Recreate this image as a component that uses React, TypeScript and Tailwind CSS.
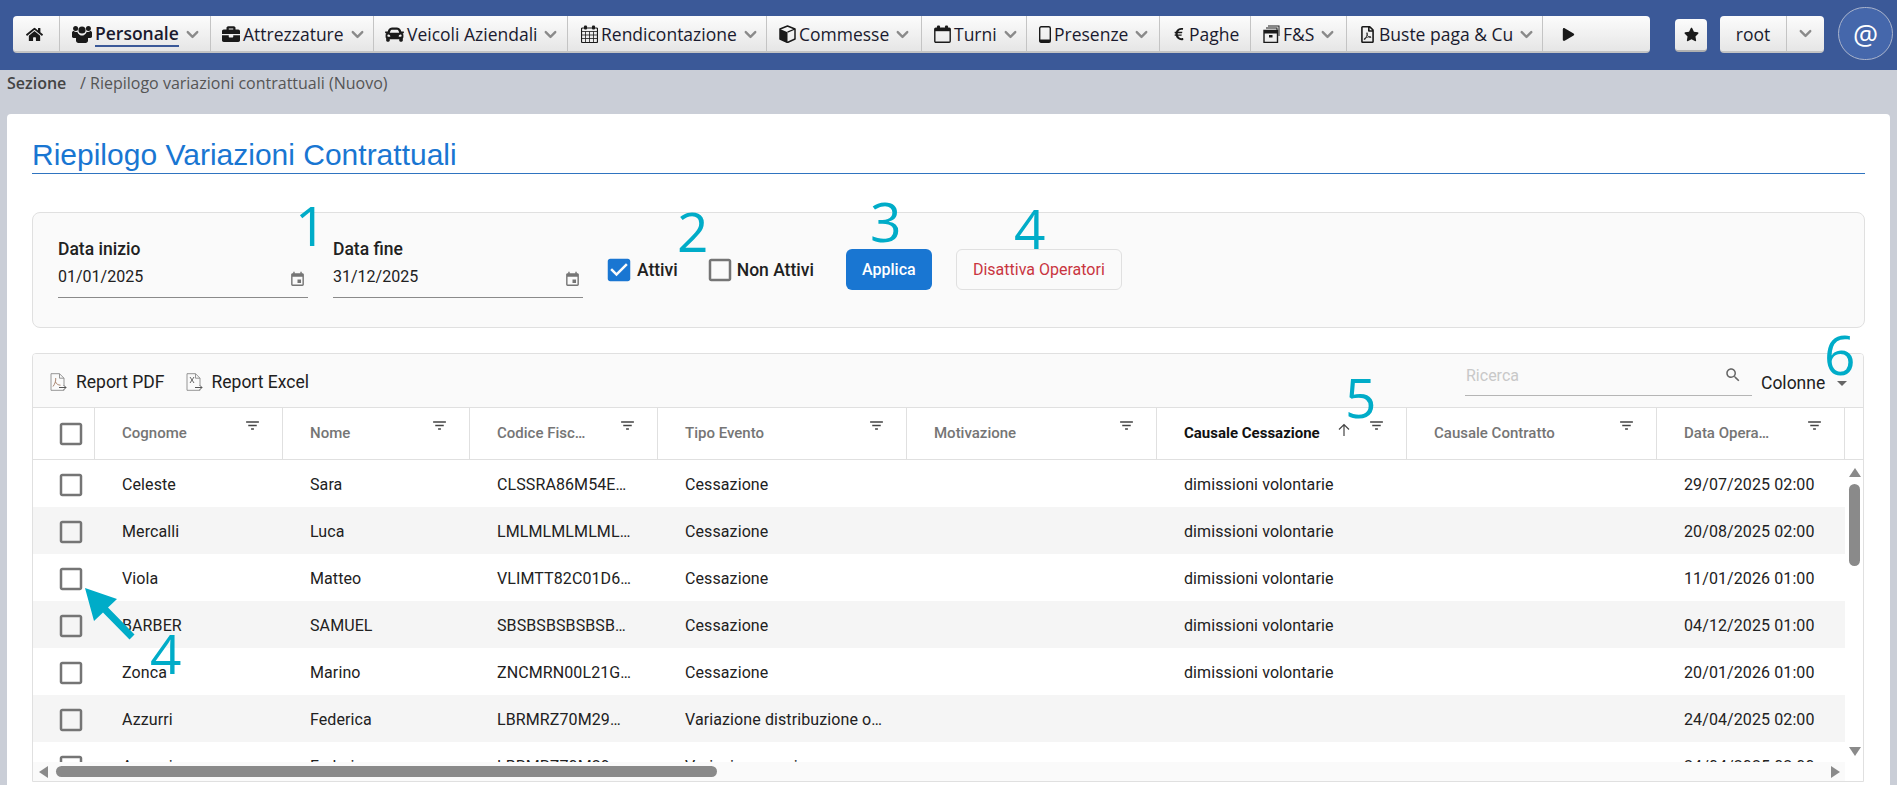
import React from 'react';
import {
  FaHome,
  FaBriefcase,
  FaCar,
  FaEuroSign,
  FaRegFilePdf,
  FaPlay,
  FaStar,
} from 'react-icons/fa';
import { ChevronDown } from 'lucide-react';

const UsersIcon = () => (
  <svg width="20" height="18" viewBox="0 0 20 18" fill="#1a1a1a">
    <circle cx="10" cy="5" r="3.6" />
    <circle cx="3.6" cy="3.4" r="2.5" />
    <circle cx="16.4" cy="3.4" r="2.5" />
    <path d="M0 7.5c0-1 .8-1.6 1.8-1.6.6.7 1.4 1.1 2.3 1.1.5 0 1-.1 1.3-.3.3 1.300 1.100 2.400 2.200 3.100C5.800 10.400 4.700 11.600 4.300 13H1.500C.6 13 0 12.400 0 11.600z" />
    <path d="M20 7.500c0-1-.8-1.600-1.800-1.600-.6.7-1.400 1.100-2.300 1.100-.5 0-1-.1-1.300-.3-.3 1.300-1.100 2.400-2.200 3.100 1.800.6 2.900 1.800 3.300 3.200h2.800c.9 0 1.500-.6 1.500-1.400z" />
    <path d="M6.600 9.200c.9.800 2.100 1.300 3.400 1.300s2.500-.5 3.400-1.300c1.500.2 2.600 1.400 2.600 3v3.300c0 1.400-1 2.500-2.500 2.500h-7C5 18 4 16.900 4 15.500v-3.300c0-1.600 1.100-2.800 2.600-3z" />
  </svg>
);

const CalendarGridIcon = () => (
  <svg width="17" height="18" viewBox="0 0 17 18" fill="none" stroke="#1a1a1a">
    <rect x="0.5" y="3" width="16" height="14.5" rx="1" strokeWidth="1.2" />
    <path d="M0.5 6.5h16M0.5 10h16M0.5 13.5h16M4.5 6.5v11M8.5 6.5v11M12.5 6.5v11" strokeWidth="0.8" />
    <rect x="3" y="0.5" width="3" height="4" rx="1" fill="#1a1a1a" stroke="none" />
    <rect x="11" y="0.5" width="3" height="4" rx="1" fill="#1a1a1a" stroke="none" />
  </svg>
);

const CubeIcon = () => (
  <svg width="17" height="18" viewBox="0 0 17 18">
    <path d="M8.5 1 16 4v10l-7.5 3.5L1 14V4z" fill="none" stroke="#1a1a1a" strokeWidth="1.5" strokeLinejoin="round" />
    <path d="M1 4l7.5 3.2v10.3L1 14z" fill="#1a1a1a" />
    <path d="M8.5 7.2 16 4" stroke="#1a1a1a" strokeWidth="1.3" />
  </svg>
);

const ShiftIcon = () => (
  <svg width="17" height="18" viewBox="0 0 17 18" fill="none">
    <rect x="0.8" y="3.2" width="15.4" height="14" rx="1" stroke="#1a1a1a" strokeWidth="1.4" />
    <rect x="0.8" y="3.2" width="15.4" height="3" fill="#1a1a1a" />
    <rect x="3" y="0.5" width="3" height="4.5" rx="1" fill="#1a1a1a" />
    <rect x="11" y="0.5" width="3" height="4.5" rx="1" fill="#1a1a1a" />
  </svg>
);

const TabletIcon = () => (
  <svg width="12" height="17" viewBox="0 0 12 17" fill="none">
    <rect x="0.7" y="0.7" width="10.6" height="15.6" rx="1.5" stroke="#1a1a1a" strokeWidth="1.4" />
    <rect x="0.7" y="13.5" width="10.6" height="2.8" fill="#1a1a1a" />
  </svg>
);

const ArchiveIcon = () => (
  <svg width="17" height="18" viewBox="0 0 17 18" fill="#1a1a1a">
    <path d="M5 .5h11.5V11h-1V1.5H5z" />
    <path d="M3 2.5h11.5V5h-1V3.5H3z" />
    <path d="M1 5.5h13.5v12H1z" fill="none" stroke="#1a1a1a" strokeWidth="1.4" />
    <rect x="1" y="5.5" width="13.5" height="3" />
    <rect x="6" y="10" width="3.5" height="2.5" />
  </svg>
);

const ReportIcon = ({ mark }: { mark: 'pdf' | 'xls' }) => (
  <svg width="17" height="18" viewBox="0 0 17 18" fill="none">
    <path d="M1 .7h8.5L14 5.2V13M14 16v1.3H1V.7" stroke="#8a8a8a" strokeWidth="0.9" />
    <path d="M9.5.7v4.5H14" stroke="#8a8a8a" strokeWidth="0.9" />
    {mark === 'pdf' ? (
      <path d="M3 13.5c2-2.5 3-6 2.7-8.5M5.5 9c1 2 2.5 3 5 3.2" stroke="#a07860" strokeWidth="0.9" />
    ) : (
      <path d="M4 4l4 6M8 4l-4 6" stroke="#666" strokeWidth="1" />
    )}
    <path d="M9 14.5h7M14 12.5l2 2-2 2" stroke="#555" strokeWidth="1" />
  </svg>
);

const EventIcon = () => (
  <svg width="17" height="17" viewBox="0 0 24 24" fill="#757575">
    <path d="M17 12h-5v5h5v-5zM16 1v2H8V1H6v2H5c-1.11 0-1.99.9-1.99 2L3 19c0 1.1.89 2 2 2h14c1.1 0 2-.9 2-2V5c0-1.1-.9-2-2-2h-1V1h-2zm3 18H5V8h14v11z" />
  </svg>
);

const FilterIcon = () => (
  <svg width="17" height="17" viewBox="0 0 24 24" fill="#444">
    <path d="M10 18h4v-2h-4v2zM3 6v2h18V6H3zm3 7h12v-2H6v2z" />
  </svg>
);

const Checkbox = ({ checked = false }: { checked?: boolean }) => (
  <svg width="30" height="30" viewBox="0 0 24 24" fill={checked ? '#1976d2' : '#757575'}>
    {checked ? (
      <path d="M19 3H5c-1.11 0-2 .9-2 2v14c0 1.1.89 2 2 2h14c1.11 0 2-.9 2-2V5c0-1.1-.89-2-2-2zm-9 14l-5-5 1.41-1.41L10 14.17l7.59-7.59L19 8l-9 9z" />
    ) : (
      <path d="M19 5v14H5V5h14m0-2H5c-1.1 0-2 .9-2 2v14c0 1.1.9 2 2 2h14c1.1 0 2-.9 2-2V5c0-1.1-.9-2-2-2z" />
    )}
  </svg>
);

const menu = [
  { w: 'w-[47px] pl-[13px]', icon: <FaHome size={17} /> },
  { w: 'w-[151px] pl-[12px]', icon: <UsersIcon />, label: 'Personale', arrow: true, active: true },
  { w: 'w-[163px] pl-[11px]', icon: <FaBriefcase size={18} />, label: 'Attrezzature', arrow: true },
  { w: 'w-[194px] pl-[11px]', icon: <FaCar size={19} />, label: 'Veicoli Aziendali', arrow: true },
  { w: 'w-[199px] pl-[13px]', icon: <CalendarGridIcon />, label: 'Rendicontazione', arrow: true },
  { w: 'w-[155px] pl-[12px]', icon: <CubeIcon />, label: 'Commesse', arrow: true },
  { w: 'w-[105px] pl-[12px]', icon: <ShiftIcon />, label: 'Turni', arrow: true },
  { w: 'w-[133px] pl-[12px]', icon: <TabletIcon />, label: 'Presenze', arrow: true },
  { w: 'w-[91px] pl-[12px]', icon: <FaEuroSign size={14} />, label: 'Paghe' },
  { w: 'w-[96px] pl-[12px]', icon: <ArchiveIcon />, label: 'F&S', arrow: true },
  { w: 'w-[196px] pl-[12px]', icon: <FaRegFilePdf size={17} />, label: 'Buste paga & Cu', arrow: true },
  { w: 'w-[107px] pl-[19px]', icon: <FaPlay size={13} /> },
];

const columns = [
  { label: 'Cognome' },
  { label: 'Nome' },
  { label: 'Codice Fisc…' },
  { label: 'Tipo Evento' },
  { label: 'Motivazione' },
  { label: 'Causale Cessazione', sorted: true },
  { label: 'Causale Contratto' },
  { label: 'Data Opera…' },
];

const rows = [
  ['Celeste', 'Sara', 'CLSSRA86M54E…', 'Cessazione', '', 'dimissioni volontarie', '', '29/07/2025 02:00'],
  ['Mercalli', 'Luca', 'LMLMLMLMLML…', 'Cessazione', '', 'dimissioni volontarie', '', '20/08/2025 02:00'],
  ['Viola', 'Matteo', 'VLIMTT82C01D6…', 'Cessazione', '', 'dimissioni volontarie', '', '11/01/2026 01:00'],
  ['BARBER', 'SAMUEL', 'SBSBSBSBSBSB…', 'Cessazione', '', 'dimissioni volontarie', '', '04/12/2025 01:00'],
  ['Zonca', 'Marino', 'ZNCMRN00L21G…', 'Cessazione', '', 'dimissioni volontarie', '', '20/01/2026 01:00'],
  ['Azzurri', 'Federica', 'LBRMRZ70M29…', 'Variazione distribuzione o…', '', '', '', '24/04/2025 02:00'],
  ['Azzurri', 'Federica', 'LBRMRZ70M29…', 'Variazione orario', '', '', '', '24/04/2025 02:00'],
];

const gridCols = 'grid grid-cols-[62px_188px_187px_188px_249px_250px_250px_250px_188px]';

const Annotation = ({ value, className }: { value: string; className: string }) => (
  <span className={`absolute font-['Open_Sans',sans-serif] font-medium text-[55px] leading-none text-[#00acc8] ${className}`}>
    {value}
  </span>
);

export default function App() {
  return (
    <div className="relative w-[1897px] h-[785px] overflow-hidden bg-[#caced7] font-['Roboto',sans-serif] text-[#212121]">
      <header className="h-[70px] flex items-start pl-[13px] bg-[#3b5998] font-['Open_Sans',sans-serif] text-[17.5px] text-[#1a1a2e]">
        <nav className="mt-[16px] h-[37px] flex rounded-[4px] overflow-hidden border-b-2 border-[#c4c4c4] bg-gradient-to-b from-[#fcfcfc] to-[#e6e6e6]">
          {menu.map((item, i) => (
            <div
              key={i}
              className={`${item.w} flex items-center gap-[3px] pt-[1px] border-r border-[#c4c4c4] last:border-r-0 whitespace-nowrap`}
            >
              <span className="shrink-0 flex items-center text-[#1a1a1a]">{item.icon}</span>
              {item.label && (
                <span className={item.active ? 'font-semibold border-b-2 border-[#3b5998] leading-[24px]' : ''}>
                  {item.label}
                </span>
              )}
              {item.arrow && <ChevronDown size={19} strokeWidth={3} className="ml-[1px] text-[#8a8a8a] shrink-0" />}
            </div>
          ))}
        </nav>
        <button className="ml-[25px] mt-[19px] w-[32px] h-[33px] flex items-center justify-center rounded-[4px] border-b-2 border-[#b0b0b0] bg-gradient-to-b from-[#fcfcfc] to-[#e6e6e6]">
          <FaStar size={15} className="text-[#1a1a1a]" />
        </button>
        <div className="ml-[13px] mt-[16px] w-[104px] h-[37px] flex rounded-[4px] border-b-2 border-[#c4c4c4] bg-gradient-to-b from-[#fcfcfc] to-[#e6e6e6]">
          <span className="w-[67px] pt-[1px] flex items-center justify-center border-r border-[#c4c4c4]">root</span>
          <span className="flex-1 flex items-center justify-center">
            <ChevronDown size={19} strokeWidth={3} className="text-[#8a8a8a]" />
          </span>
        </div>
        <div className="ml-[14px] mt-[7px] w-[55px] h-[53px] shrink-0 flex items-center justify-center rounded-full border border-[#aab4cc] bg-[#4567ab] text-white text-[28px]">
          @
        </div>
      </header>

      <div className="h-[44px] pt-[2px] pl-[7px] flex items-start font-['Open_Sans',sans-serif] text-[16px] leading-[22px] text-[#555]">
        <span className="font-semibold text-[#444] w-[73px]">Sezione</span>
        <span>/ Riepilogo variazioni contrattuali (Nuovo)</span>
      </div>

      <main className="ml-[7px] w-[1883px] h-[671px] rounded-t-[4px] bg-white px-[25px]">
        <h1 className="h-[60px] pt-[24px] border-b border-[#2f74c0] font-['Liberation_Sans',sans-serif] text-[30px] leading-[34px] text-[#1976d2]">
          Riepilogo Variazioni Contrattuali
        </h1>

        <section className="mt-[38px] h-[116px] flex items-start rounded-[8px] border border-[#e0e0e0] bg-[#fafafa] pl-[25px]">
          <div className="w-[250px] mt-[24px]">
            <div className="text-[17.5px] font-medium leading-[24px]">Data inizio</div>
            <div className="mt-[4px] h-[33px] flex justify-between items-start border-b border-[#8a8a8a] text-[16px] leading-[24px]">
              <span>01/01/2025</span>
              <span className="mt-[6px] mr-[2px]"><EventIcon /></span>
            </div>
          </div>
          <div className="w-[250px] ml-[25px] mt-[24px]">
            <div className="text-[17.5px] font-medium leading-[24px]">Data fine</div>
            <div className="mt-[4px] h-[33px] flex justify-between items-start border-b border-[#8a8a8a] text-[16px] leading-[24px]">
              <span>31/12/2025</span>
              <span className="mt-[6px] mr-[2px]"><EventIcon /></span>
            </div>
          </div>
          <label className="ml-[21px] mt-[42px] flex items-center text-[17.5px] font-medium">
            <Checkbox checked />
            <span className="ml-[3px]">Attivi</span>
          </label>
          <label className="ml-[27px] mt-[42px] flex items-center text-[17.5px] font-medium">
            <Checkbox />
            <span className="ml-[2px]">Non Attivi</span>
          </label>
          <button className="ml-[32px] mt-[36px] w-[86px] h-[41px] rounded-[6px] bg-[#1976d2] text-white text-[16px] font-medium">
            Applica
          </button>
          <button className="ml-[24px] mt-[36px] w-[166px] h-[41px] rounded-[6px] border border-[#e0e0e0] text-[#c9353f] text-[16px]">
            Disattiva Operatori
          </button>
        </section>

        <section className="mt-[25px] w-[1832px] h-[429px] border border-[#e0e0e0] rounded-t-[4px] overflow-hidden">
          <div className="h-[54px] flex items-start border-b border-[#e0e0e0] bg-[#fafafa] text-[17.5px]">
            <div className="ml-[17px] mt-[15px] flex items-center">
              <ReportIcon mark="pdf" />
              <span className="ml-[9px]">Report PDF</span>
            </div>
            <div className="ml-[21px] mt-[15px] flex items-center">
              <ReportIcon mark="xls" />
              <span className="ml-[9px]">Report Excel</span>
            </div>
            <div className="ml-auto mt-[9px] w-[287px] h-[33px] flex justify-between border-b border-[#b5b5b5]">
              <span className="text-[#c8c8c8] text-[16px] pl-[1px] leading-[26px]">Ricerca</span>
              <svg width="18" height="18" viewBox="0 0 24 24" fill="#666" className="mr-[10px] mt-[3px]">
                <path d="M15.5 14h-.79l-.28-.27C15.41 12.59 16 11.11 16 9.5 16 5.91 13.09 3 9.5 3S3 5.91 3 9.5 5.91 16 9.5 16c1.61 0 3.09-.59 4.23-1.57l.27.28v.79l5 4.99L20.49 19l-4.99-5zm-6 0C7.01 14 5 11.99 5 9.5S7.01 5 9.5 5 14 7.01 14 9.5 11.99 14 9.5 14z" />
              </svg>
            </div>
            <div className="ml-[9px] mt-[16px] w-[102px] flex items-center">
              <span>Colonne</span>
              <svg width="24" height="24" viewBox="0 0 24 24" fill="#666" className="ml-[5px]">
                <path d="M7 10l5 5 5-5z" />
              </svg>
            </div>
          </div>

          <div className={`${gridCols} h-[52px] border-b border-[#e0e0e0] text-[15px] font-medium text-[#757575]`}>
            <div className="flex items-center pl-[23px] border-r border-[#e0e0e0]">
              <Checkbox />
            </div>
            {columns.map((col) => (
              <div key={col.label} className="relative flex items-center pl-[27px] border-r border-[#e0e0e0]">
                <span className={col.sorted ? 'text-[#111] font-bold' : ''}>{col.label}</span>
                {col.sorted && (
                  <svg width="16" height="16" viewBox="0 0 16 16" fill="none" stroke="#444" strokeWidth="1.2" className="absolute right-[54px] top-[14px]">
                    <path d="M8 14V2.5M3 7.5l5-5 5 5" />
                  </svg>
                )}
                <span className="absolute right-[21px] top-[9px]"><FilterIcon /></span>
              </div>
            ))}
          </div>

          <div className="flex">
            <div className="w-[1812px]">
              <div className="h-[302px] overflow-hidden">
                {rows.map((row, i) => (
                  <div
                    key={i}
                    className={`${gridCols} h-[47px] items-center text-[16px] tracking-[0.1px] ${i % 2 === 1 ? 'bg-[#f5f5f5]' : 'bg-white'}`}
                  >
                    <div className="flex pl-[23px] pt-[2px]">
                      <Checkbox />
                    </div>
                    {row.map((cell, j) => (
                      <div key={j} className="pl-[27px] pt-[3px] whitespace-nowrap">{cell}</div>
                    ))}
                  </div>
                ))}
              </div>
              <div className="h-[19px] flex items-center bg-[#fafafa] pl-[6px]">
                <span className="w-0 h-0 border-y-[6px] border-y-transparent border-r-[9px] border-r-[#8a8a8a]" />
                <span className="ml-[8px] w-[661px] h-[11px] rounded-full bg-[#8a8a8a]" />
                <span className="ml-auto mr-[5px] w-0 h-0 border-y-[6px] border-y-transparent border-l-[9px] border-l-[#8a8a8a]" />
              </div>
            </div>
            <div className="w-[18px] h-[321px] flex flex-col items-center pl-[1px] pt-[8px]">
              <span className="w-0 h-0 border-x-[6px] border-x-transparent border-b-[9px] border-b-[#8a8a8a]" />
              <span className="mt-[7px] w-[11px] h-[82px] rounded-full bg-[#8a8a8a]" />
              <span className="mt-[181px] w-0 h-0 border-x-[6px] border-x-transparent border-t-[9px] border-t-[#8a8a8a]" />
            </div>
          </div>
        </section>
      </main>

      <Annotation value="1" className="left-[295px] top-[197px]" />
      <Annotation value="2" className="left-[677px] top-[203px]" />
      <Annotation value="3" className="left-[870px] top-[193px]" />
      <Annotation value="4" className="left-[1014px] top-[200px]" />
      <Annotation value="5" className="left-[1345px] top-[369px]" />
      <Annotation value="6" className="left-[1824px] top-[326px]" />
      <Annotation value="4" className="left-[150px] top-[625px]" />
      <svg width="60" height="60" viewBox="0 0 60 60" className="absolute left-[80px] top-[583px]">
        <path d="M5 5 37 16 28 24.500 54.500 51.500 49.500 56.500 23 29.500 14 38Z" fill="#00acc8" />
      </svg>
    </div>
  );
}
